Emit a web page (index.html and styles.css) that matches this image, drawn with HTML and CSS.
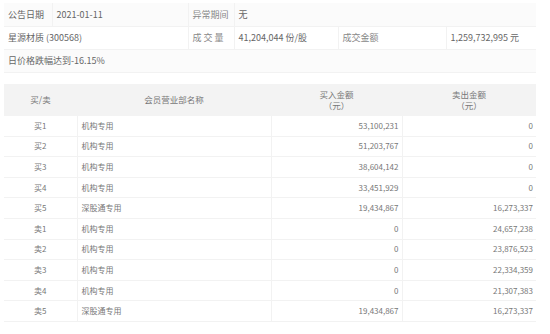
FILE: index.html
```html
<!DOCTYPE html>
<html lang="zh-CN">
<head>
    <meta charset="UTF-8">
    <title>龙虎榜 - 星源材质</title>
    <link rel="stylesheet" href="styles.css">
</head>
<body>
    <div class="page">
        <table class="info-table">
            <colgroup>
                <col class="c1"><col class="c2"><col class="c3"><col class="c4"><col class="c5"><col class="c6">
            </colgroup>
            <tr class="shade">
                <td>公告日期</td>
                <td>2021-01-11</td>
                <td class="label">异常期间</td>
                <td colspan="3">无</td>
            </tr>
            <tr>
                <td colspan="2">星源材质 (300568)</td>
                <td class="label">成 交 量</td>
                <td>41,204,044 份/股</td>
                <td class="label">成交金额</td>
                <td>1,259,732,995 元</td>
            </tr>
            <tr class="shade">
                <td colspan="6">日价格跌幅达到-16.15%</td>
            </tr>
        </table>

        <table class="trade-table">
            <colgroup>
                <col class="t1"><col class="t2"><col class="t3"><col class="t4">
            </colgroup>
            <thead>
                <tr>
                    <th>买/卖</th>
                    <th>会员营业部名称</th>
                    <th>买入金额<br>（元）</th>
                    <th>卖出金额<br>（元）</th>
                </tr>
            </thead>
            <tbody>
                <tr><td class="side">买1</td><td>机构专用</td><td class="num">53,100,231</td><td class="num">0</td></tr>
                <tr><td class="side">买2</td><td>机构专用</td><td class="num">51,203,767</td><td class="num">0</td></tr>
                <tr><td class="side">买3</td><td>机构专用</td><td class="num">38,604,142</td><td class="num">0</td></tr>
                <tr><td class="side">买4</td><td>机构专用</td><td class="num">33,451,929</td><td class="num">0</td></tr>
                <tr><td class="side">买5</td><td>深股通专用</td><td class="num">19,434,867</td><td class="num">16,273,337</td></tr>
                <tr><td class="side">卖1</td><td>机构专用</td><td class="num">0</td><td class="num">24,657,238</td></tr>
                <tr><td class="side">卖2</td><td>机构专用</td><td class="num">0</td><td class="num">23,876,523</td></tr>
                <tr><td class="side">卖3</td><td>机构专用</td><td class="num">0</td><td class="num">22,334,359</td></tr>
                <tr><td class="side">卖4</td><td>机构专用</td><td class="num">0</td><td class="num">21,307,383</td></tr>
                <tr><td class="side">卖5</td><td>深股通专用</td><td class="num">19,434,867</td><td class="num">16,273,337</td></tr>
            </tbody>
        </table>
    </div>
</body>
</html>
```

FILE: styles.css
```css
* {
    margin: 0;
    padding: 0;
    box-sizing: border-box;
}

body {
    font-family: "Noto Sans CJK SC", "Noto Sans", sans-serif;
    background-color: #ffffff;
    color: #666666;
}

.page {
    width: 532px;
    margin-left: 4px;
    padding-top: 3px;
}

table {
    width: 100%;
    border-collapse: collapse;
    table-layout: fixed;
}

/* top info block */
.info-table {
    font-size: 9px;
    color: #666666;
}

.info-table .c1 { width: 48px; }
.info-table .c2 { width: 136px; }
.info-table .c3 { width: 46px; }
.info-table .c4 { width: 104px; }
.info-table .c5 { width: 108px; }
.info-table .c6 { width: 90px; }

.info-table td {
    height: 23px;
    padding: 0 4px;
    border-right: 1px solid #f2f2f2;
    border-bottom: 1px solid #f2f2f2;
    white-space: nowrap;
    line-height: 1;
}

.info-table td:last-child {
    border-right: none;
}

.info-table .shade td {
    background-color: #fbfbfb;
}

.info-table .label {
    color: #888888;
}

/* trading list */
.trade-table {
    margin-top: 11px;
    font-size: 8px;
    color: #777777;
}

.trade-table .t1 { width: 73px; }
.trade-table .t2 { width: 194px; }
.trade-table .t3 { width: 131px; }
.trade-table .t4 { width: 134px; }

.trade-table th {
    height: 32px;
    background-color: #f3f3f3;
    font-weight: normal;
    font-size: 8.5px;
    line-height: 11px;
    color: #777777;
    text-align: center;
}

.trade-table td {
    height: 20.6px;
    padding: 0 4px;
    border-bottom: 1px solid #f2f2f2;
    border-right: 1px solid #f2f2f2;
    line-height: 1;
    white-space: nowrap;
}

.trade-table td:last-child {
    border-right: none;
}

.trade-table .side {
    text-align: center;
}

.trade-table .num {
    text-align: right;
    padding-right: 3px;
}
```
